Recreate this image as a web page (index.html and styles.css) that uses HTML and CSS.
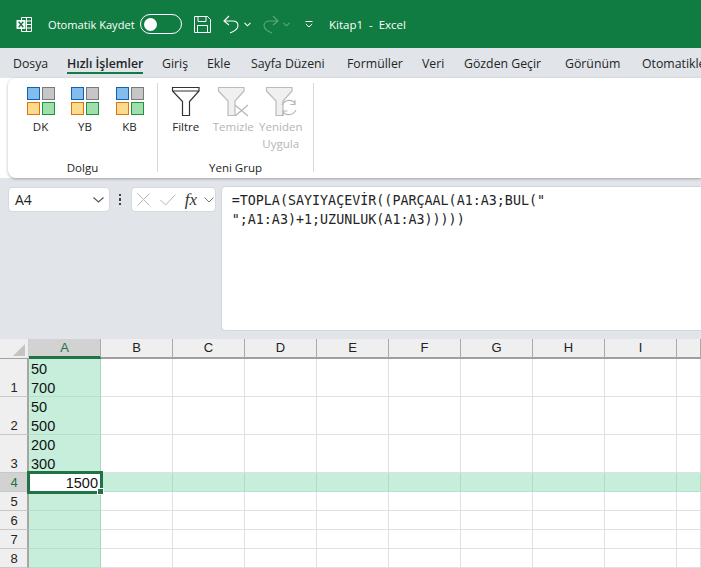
FILE: index.html
```html
<!DOCTYPE html>
<html lang="tr">
<head>
<meta charset="utf-8">
<title>Kitap1 - Excel</title>
<link rel="stylesheet" href="styles.css">
</head>
<body>
<header class="titlebar">
  <svg class="ic-logo" width="17" height="17" viewBox="0 0 17 17"><path d="M5.500 1.500H15.500V15.500H5.500V12.500M5.500 4.500V1.500M10.500 1.500V15.500M10.500 5H15.500M10.500 8.500H15.500M10.500 12H15.500" fill="none" stroke="#fff"/><rect x="0.500" y="4" width="9" height="9" fill="#fff"/><path d="M2.700 5.800L7.300 11.200M7.300 5.800L2.700 11.200" stroke="#107c41" stroke-width="1.500"/></svg>
  <span class="autosave">Otomatik Kaydet</span>
  <span class="toggle"><span class="knob"></span></span>
  <svg class="ic-save" width="17" height="17" viewBox="0 0 17 17"><path d="M.5.500H13.500L16.500 3.500V16.500H.5ZM4 .500V5.500H12V.500M3.500 16.500V9.500H13.500V16.500" fill="none" stroke="#fff"/></svg>
  <svg class="ic-undo" width="16" height="19" viewBox="0 0 16 19"><path d="M6 1L1 6L6 10M1 6H9.500C13 6 15 8 15 10.500C15 13.500 12 16 7 18" fill="none" stroke="#fff" stroke-width="1.100"/></svg>
  <svg class="ic-chev" width="7" height="5" viewBox="0 0 7 5"><path d="M.5.800L3.500 3.800L6.500.800" fill="none" stroke="#fff" stroke-width="1.100"/></svg>
  <svg class="ic-redo" width="16" height="19" viewBox="0 0 16 19"><path d="M10 1L15 6L10 10M15 6H6.500C3 6 1 8 1 10.500C1 13.500 4 16 9 18" fill="none" stroke="#5da882" stroke-width="1.100"/></svg>
  <svg class="ic-chev2" width="7" height="5" viewBox="0 0 7 5"><path d="M.5.800L3.500 3.800L6.500.800" fill="none" stroke="#5da882" stroke-width="1.100"/></svg>
  <svg class="ic-qat" width="8" height="7" viewBox="0 0 8 7"><path d="M.5.500H7.500M.8 3L4 6L7.200 3" fill="none" stroke="#fff"/></svg>
  <span class="doc">Kitap1&nbsp; -&nbsp; Excel</span>
</header>

<nav class="tabs">
  <span class="tab t-dosya">Dosya</span>
  <span class="tab tab-active t-hizli">Hızlı İşlemler</span>
  <span class="tab t-giris">Giriş</span>
  <span class="tab t-ekle">Ekle</span>
  <span class="tab t-sayfa">Sayfa Düzeni</span>
  <span class="tab t-form">Formüller</span>
  <span class="tab t-veri">Veri</span>
  <span class="tab t-gozden">Gözden Geçir</span>
  <span class="tab t-gor">Görünüm</span>
  <span class="tab">Otomatikleştir</span>
</nav>

<section class="ribbon">
  <div class="group group-fill">
    <div class="group-items fill-items">
      <div class="rbtn"><span class="swatches"><i class="s-blue"></i><i class="s-gray"></i><i class="s-orange"></i><i class="s-green"></i></span><span class="rlabel">DK</span></div>
      <div class="rbtn"><span class="swatches"><i class="s-blue"></i><i class="s-gray"></i><i class="s-orange"></i><i class="s-green"></i></span><span class="rlabel">YB</span></div>
      <div class="rbtn"><span class="swatches"><i class="s-blue"></i><i class="s-gray"></i><i class="s-orange"></i><i class="s-green"></i></span><span class="rlabel">KB</span></div>
    </div>
    <div class="group-name">Dolgu</div>
  </div>
  <div class="group group-new">
    <div class="group-items filter-items">
      <div class="fbtn">
        <svg width="30" height="31" viewBox="0 0 30 31"><path d="M1.500 1.500H28V5L18.500 15.500V29.500H11.500V15.500L1.500 5ZM1.500 5H28" fill="#fff" stroke="#333" stroke-width="1.200"/></svg>
        <span class="rlabel">Filtre</span>
      </div>
      <div class="fbtn fbtn-off">
        <svg width="32" height="31" viewBox="0 0 32 31"><path d="M1.500 1.500H27V5L18 15V29.500H11V15L1.500 5Z" fill="#f0f0f0" stroke="#bbb" stroke-width="1.200"/><path d="M18 19L31 30M31 19L18 30" stroke="#b5b5b5" stroke-width="1.200"/></svg>
        <span class="rlabel">Temizle</span>
      </div>
      <div class="fbtn fbtn-off">
        <svg width="32" height="31" viewBox="0 0 32 31"><path d="M1.500 1.500H27V5L18 15V29.500H11V15L1.500 5Z" fill="#f0f0f0" stroke="#bbb" stroke-width="1.200"/><path d="M17 19C20 13 28 13 30 18M31 24C28 30 20 30 18 25M30 14V18.500H25.500M18 30V25H22.500" fill="none" stroke="#b5b5b5" stroke-width="1.100"/></svg>
        <span class="rlabel">Yeniden<br>Uygula</span>
      </div>
    </div>
    <div class="group-name">Yeni Grup</div>
  </div>
</section>

<section class="formula">
  <div class="namebox"><span>A4</span>
    <svg width="11" height="6" viewBox="0 0 11 6"><path d="M.5.500L5.500 5L10.500.500" fill="none" stroke="#555" stroke-width="1.100"/></svg>
  </div>
  <div class="dots"><i></i><i></i><i></i></div>
  <div class="fxbox">
    <svg class="ic-x" width="13" height="13" viewBox="0 0 13 13"><path d="M.5.500L12.500 12.500M12.500.500L.5 12.500" stroke="#b5b5b5"/></svg>
    <svg class="ic-v" width="16" height="12" viewBox="0 0 16 12"><path d="M.5 6L5.500 11L15.500.500" fill="none" stroke="#b5b5b5"/></svg>
    <span class="fx">fx</span>
    <svg width="10" height="6" viewBox="0 0 10 6"><path d="M.5.500L5 5L9.500.500" fill="none" stroke="#777"/></svg>
  </div>
  <div class="finput">=TOPLA(SAYIYAÇEVİR((PARÇAAL(A1:A3;BUL("<br>";A1:A3)+1;UZUNLUK(A1:A3)))))</div>
</section>

<main class="sheet">
  <div class="corner"><span class="tri"></span></div>
  <div class="ch ch-sel">A</div><div class="ch">B</div><div class="ch">C</div><div class="ch">D</div><div class="ch">E</div><div class="ch">F</div><div class="ch">G</div><div class="ch">H</div><div class="ch">I</div><div class="ch"></div>

  <div class="rh">1</div><div class="c c-a">50<br>700</div><div class="c"></div><div class="c"></div><div class="c"></div><div class="c"></div><div class="c"></div><div class="c"></div><div class="c"></div><div class="c"></div><div class="c"></div>
  <div class="rh">2</div><div class="c c-a">50<br>500</div><div class="c"></div><div class="c"></div><div class="c"></div><div class="c"></div><div class="c"></div><div class="c"></div><div class="c"></div><div class="c"></div><div class="c"></div>
  <div class="rh">3</div><div class="c c-a">200<br>300</div><div class="c"></div><div class="c"></div><div class="c"></div><div class="c"></div><div class="c"></div><div class="c"></div><div class="c"></div><div class="c"></div><div class="c"></div>
  <div class="rh rh-sel">4</div><div class="c c-active">1500<span class="handle"></span></div><div class="c c-row"></div><div class="c c-row"></div><div class="c c-row"></div><div class="c c-row"></div><div class="c c-row"></div><div class="c c-row"></div><div class="c c-row"></div><div class="c c-row"></div><div class="c c-row"></div>
  <div class="rh">5</div><div class="c c-a"></div><div class="c"></div><div class="c"></div><div class="c"></div><div class="c"></div><div class="c"></div><div class="c"></div><div class="c"></div><div class="c"></div><div class="c"></div>
  <div class="rh">6</div><div class="c c-a"></div><div class="c"></div><div class="c"></div><div class="c"></div><div class="c"></div><div class="c"></div><div class="c"></div><div class="c"></div><div class="c"></div><div class="c"></div>
  <div class="rh">7</div><div class="c c-a"></div><div class="c"></div><div class="c"></div><div class="c"></div><div class="c"></div><div class="c"></div><div class="c"></div><div class="c"></div><div class="c"></div><div class="c"></div>
  <div class="rh">8</div><div class="c c-a"></div><div class="c"></div><div class="c"></div><div class="c"></div><div class="c"></div><div class="c"></div><div class="c"></div><div class="c"></div><div class="c"></div><div class="c"></div>
</main>
</body>
</html>
```
FILE: styles.css
```css
* { box-sizing: border-box; }
html, body { margin: 0; height: 568px; overflow: hidden; }
body { width: 701px; background: #fff; font-family: "Open Sans", "Noto Sans", sans-serif; color: #242424; }

.titlebar { height: 48px; background: #107c41; color: #fff; display: flex; align-items: center; padding-left: 16px; white-space: nowrap; }
.titlebar svg { display: block; flex: none; }
.autosave { font-size: 11.100px; margin-left: 15px; width: 92px; }
.toggle { width: 42px; height: 20px; border: 1px solid #fff; border-radius: 10px; display: flex; align-items: center; padding-left: 3px; flex: none; }
.knob { width: 13px; height: 13px; border-radius: 50%; background: #fff; }
.ic-save { margin-left: 12px; }
.ic-undo { margin-left: 12px; }
.ic-chev { margin-left: 5px; }
.ic-redo { margin-left: 12px; }
.ic-chev2 { margin-left: 4px; }
.ic-qat { margin-left: 15px; }
.doc { font-size: 11.500px; margin-left: 16px; }

.tabs { height: 30px; background: #e1e4e9; display: flex; align-items: flex-start; padding-left: 13px; white-space: nowrap; overflow: hidden; }
.tab { font-size: 12.300px; line-height: 17px; padding-top: 7px; height: 26px; flex: none; }
.tab-active { font-weight: 600; border-bottom: 2px solid #107c41; }
.t-dosya { width: 54px; }
.t-hizli { margin-right: 19px; width: 76px; }
.t-giris { width: 45px; }
.t-ekle { width: 44px; }
.t-sayfa { width: 96px; }
.t-form { width: 75px; }
.t-veri { width: 42px; }
.t-gozden { width: 101px; }
.t-gor { width: 77px; }

.ribbon { height: 100px; margin-left: 8px; background: #fff; border-radius: 8px 0 0 8px; display: flex; box-shadow: 0 1px 3px rgba(0,0,0,.3); position: relative; }
.group { position: relative; display: flex; flex-direction: column; margin: 5px 0 6px; border-right: 1px solid #d8d8d8; }
.group-fill { width: 150px; }
.group-new { width: 156px; }
.group-items { display: flex; height: 72px; flex: none; }
.group-name { font-size: 11.500px; line-height: 16px; text-align: center; margin-top: 5px; }
.fill-items { padding: 4px 0 0 18px; gap: 15.500px; }
.rbtn { width: 29px; display: flex; flex-direction: column; align-items: center; }
.swatches { display: grid; grid-template-columns: 13px 13px; grid-auto-rows: 13px; gap: 2px; }
.swatches i { display: block; border: 1px solid; }
.s-blue { background: #83bdee; border-color: #0f62ac !important; }
.s-gray { background: #c6c6c6; border-color: #7a7a7a !important; }
.s-orange { background: #fbdb8d; border-color: #e2710a !important; }
.s-green { background: #a0dfa9; border-color: #1f9145 !important; }
.rlabel { font-size: 11.500px; line-height: 17px; text-align: center; margin-top: 1px; white-space: nowrap; }
.fill-items .rlabel { margin-top: 3px; }
.filter-items { padding: 3px 0 0 4px; }
.fbtn { width: 47.500px; display: flex; flex-direction: column; align-items: center; }
.fbtn svg { display: block; }
.fbtn-off { color: #b5b5b5; }

.formula { height: 161px; background: #e1e4e9; display: flex; align-items: flex-start; padding: 8px 0 0 8px; }
.namebox { width: 102px; height: 25px; margin-top: 1px; background: #fff; border: 1px solid #d5d8dc; border-radius: 4px; display: flex; align-items: center; justify-content: space-between; padding: 0 5px 0 6px; font-size: 14px; }
.dots { width: 22px; height: 25px; display: flex; flex-direction: column; align-items: center; justify-content: center; gap: 2px; margin-top: 1px; margin-left: -1px; }
.dots i { width: 2.500px; height: 2.500px; background: #444; }
.fxbox { width: 85px; height: 25px; margin-top: 1px; background: #fff; border: 1px solid #d5d8dc; border-radius: 4px; display: flex; align-items: center; padding-left: 5px; }
.ic-v { margin-left: 10px; }
.fx { font-family: "Liberation Serif", serif; font-style: italic; font-size: 17px; margin-left: 9px; width: 19px; color: #333; }
.finput { width: 481px; height: 145px; margin-left: 5px; background: #fff; border: 1px solid #d3d6da; border-width: 1px 0 1px 1px; border-radius: 5px 0 0 5px; padding: 4px 0 0 10px; font-family: "DejaVu Sans Mono", monospace; font-size: 13.350px; line-height: 19px; white-space: nowrap; overflow: hidden; }

.sheet { display: grid; grid-template-columns: 29px repeat(9, 72px) 24px; grid-template-rows: 20px 38px 38px 38px repeat(5, 19px); background: #fff; font-family: "Liberation Sans", Arial, sans-serif; }
.corner { background: #efefef; border-right: 1px solid #ccc; border-bottom: 1px solid #a0a0a0; position: relative; }
.tri { position: absolute; right: 3px; bottom: 2px; width: 0; height: 0; border-style: solid; border-width: 0 0 12px 12px; border-color: transparent transparent #c4c4c4 transparent; }
.ch { background: #efefef; border-right: 1px solid #a9a9a9; border-bottom: 2px solid #9f9f9f; font-size: 13px; text-align: center; line-height: 18px; color: #222; }
.ch-sel { background: #d2d2d2; border-bottom: 3px solid #217346; color: #217346; }
.rh { background: #efefef; border-right: 2px solid #a6a6a6; border-bottom: 1px solid #c8c8c8; font-size: 13px; line-height: 16px; text-align: center; padding-left: 1px; display: flex; align-items: flex-end; justify-content: center; }
.rh-sel { background: #d2d2d2; color: #217346; }
.c { border-right: 1px solid #e0e0e0; border-bottom: 1px solid #e0e0e0; min-width: 0; font-size: 14.500px; line-height: 19px; color: #111; padding: 1px 0 0 2px; }
.c-a { background: #c6eedb; border-right-color: #a7d7bc; border-bottom-color: #b7e0cb; }
.c-row { background: #c6eedb; border-right-color: #b0dcc4; border-bottom-color: #b7e0cb; }
.c-active { position: relative; background: #fff; text-align: right; padding: 0 3px 0 0; outline: 3px solid #217346; outline-offset: -1px; border: 0; line-height: 20px; z-index: 1; }
.handle { position: absolute; right: -2px; bottom: -2px; width: 5px; height: 5px; background: #217346; box-shadow: 0 0 0 1px #fff; }
```
